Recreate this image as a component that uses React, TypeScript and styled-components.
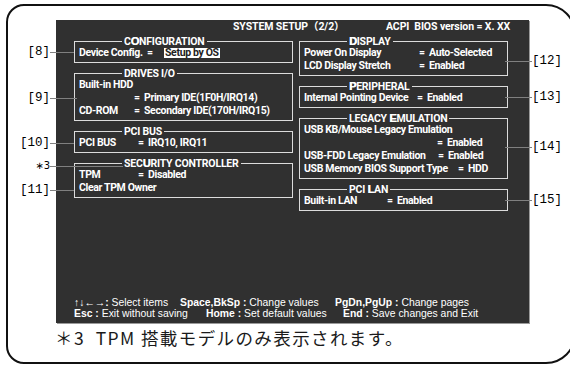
import React from 'react';
import styled, { createGlobalStyle } from 'styled-components';

const GlobalStyle = createGlobalStyle`
    html, body {
        margin: 0;
        padding: 0;
        background: #ffffff;
    }
    body {
        width: 570px;
        height: 365px;
        overflow: hidden;
    }
`;

const Page = styled.div`
    position: relative;
    width: 570px;
    height: 365px;
    box-sizing: border-box;
    padding: 4px 0 0 6px;
    overflow: hidden;
`;

const Frame = styled.div`
    width: 570px;
    height: 360px;
    box-sizing: border-box;
    border: 2px solid #111111;
    border-radius: 18px 30px 30px 18px;
    padding: 14px 0 0 48px;
`;

const Screen = styled.div`
    width: 473px;
    height: 303px;
    box-sizing: border-box;
    background: #303030;
    box-shadow: 1px 1px 0 #9a9a9a;
    color: #ffffff;
    font-family: Roboto, "Liberation Sans", "Noto Sans CJK JP", sans-serif;
    font-size: 10.5px;
    font-weight: 700;
    letter-spacing: -0.35px;
    display: flex;
    flex-direction: column;
    padding: 1px 21px 4px 18px;
`;

const Header = styled.div`
    display: flex;
    padding-left: 159px;
    line-height: 12px;
    white-space: pre;
    letter-spacing: -0.1px;
`;

const HeaderTitle = styled.span`
    width: 153px;
    flex-shrink: 0;
`;

const Columns = styled.div`
    display: grid;
    grid-template-columns: 219px 209px;
    column-gap: 6px;
    margin-top: 4px;
    align-items: start;
`;

const Column = styled.div`
    display: flex;
    flex-direction: column;
    gap: 6px;
`;

const Group = styled.fieldset`
    margin: 0;
    padding: 0 4px 3px;
    border: 1px solid #dcdcdc;
    min-width: 0;
`;

const Legend = styled.legend`
    margin-left: 43px;
    padding: 0 2px;
    line-height: 9px;
    letter-spacing: -0.2px;
`;

const Key = styled.span`
    font-family: "Liberation Sans", Arial, sans-serif;
    font-size: 11px;
    font-weight: 900;
    text-shadow: 0.4px 0 0 #ffffff;
`;

const Row = styled.div`
    display: flex;
    line-height: 13px;
    white-space: pre;
`;

const Label = styled.span<{ $w?: number }>`
    flex-shrink: 0;
    ${p => (p.$w ? `width: ${p.$w}px;` : 'margin-right: 5px;')}
`;

const Eq = styled.span`
    width: 10px;
    flex-shrink: 0;
`;

const Selected = styled.span`
    margin-left: 7px;
    padding: 0 1px;
    align-self: center;
    line-height: 10px;
    background: #ffffff;
    color: #222222;
`;

const Footer = styled.div`
    margin-top: auto;
    font-family: "Liberation Sans", Arial, sans-serif;
    font-size: 10.4px;
    line-height: 11px;
    letter-spacing: 0;
`;

const HintLine = styled.div`
    display: flex;
    white-space: pre;
`;

const Hint = styled.span<{ $w?: number }>`
    ${p => (p.$w ? `width: ${p.$w}px; flex-shrink: 0;` : '')}
`;

const Desc = styled.span`
    font-weight: normal;
`;

const Note = styled.div`
    margin: 5px 0 0 -1px;
    font-family: "Noto Sans CJK JP", "Noto Sans", sans-serif;
    font-size: 17.5px;
    letter-spacing: 1.4px;
    line-height: 20px;
    color: #1a1a1a;
    white-space: pre;
`;

const Callout = styled.div<{ $y: number; $x: number; $side: 'left' | 'right' }>`
    position: absolute;
    top: ${p => p.$y - 7}px;
    ${p => (p.$side === 'left' ? `right: ${570 - p.$x}px;` : `left: ${p.$x}px;`)}
    display: flex;
    align-items: center;
    height: 14px;
`;

const Tag = styled.span<{ $small?: boolean }>`
    font-family: ${p => (p.$small ? '"DejaVu Sans", sans-serif' : '"Liberation Mono", monospace')};
    font-size: ${p => (p.$small ? '10px' : '12.5px')};
    line-height: 14px;
    color: #000000;
`;

const Leader = styled.span<{ $len: number }>`
    width: ${p => p.$len}px;
    height: 1px;
    background: #808080;
`;

type Item = { label: string; w?: number; value?: string };

const Rows = ({ items }: { items: Item[] }) => (
    <>
        {items.map((it, i) => (
            <Row key={i}>
                <Label $w={it.w}>{it.label}</Label>
                {it.value !== undefined && <Eq>=</Eq>}
                {it.value}
            </Row>
        ))}
    </>
);

const leftCallouts = [
    { tag: '[8]', y: 52, x: 74 },
    { tag: '[9]', y: 98, x: 77 },
    { tag: '[10]', y: 143, x: 74 },
    { tag: '∗3', y: 166, x: 123, small: true },
    { tag: '[11]', y: 190, x: 74 },
];

const rightCallouts = [
    { tag: '[12]', y: 61 },
    { tag: '[13]', y: 97 },
    { tag: '[14]', y: 147 },
    { tag: '[15]', y: 200 },
];

const App = () => (
    <Page>
        <GlobalStyle />
        <Frame>
            <Screen>
                <Header>
                    <HeaderTitle>SYSTEM SETUP（2/2）</HeaderTitle>
                    <span>ACPI  BIOS version = X. XX</span>
                </Header>
                <Columns>
                    <Column>
                        <Group>
                            <Legend>C<Key>O</Key>NFIGURATION</Legend>
                            <Row>
                                <Label $w={68}>Device Config.</Label>
                                <Eq>=</Eq>
                                <Selected>Setup by OS</Selected>
                            </Row>
                        </Group>
                        <Group>
                            <Legend>DRIVES I/O</Legend>
                            <Rows
                                items={[
                                    { label: 'Built-in HDD' },
                                    { label: '', w: 55, value: 'Primary IDE(1F0H/IRQ14)' },
                                    { label: 'CD-ROM', w: 55, value: 'Secondary IDE(170H/IRQ15)' },
                                ]}
                            />
                        </Group>
                        <Group>
                            <Legend>PCI BUS</Legend>
                            <Rows items={[{ label: 'PCI BUS', w: 59, value: 'IRQ10, IRQ11' }]} />
                        </Group>
                        <Group>
                            <Legend>SEC<Key>U</Key>RITY CONTROLLER</Legend>
                            <Rows
                                items={[
                                    { label: 'TPM', w: 59, value: 'Disabled' },
                                    { label: 'Clear TPM Owner' },
                                ]}
                            />
                        </Group>
                    </Column>
                    <Column>
                        <Group>
                            <Legend><Key>D</Key>ISPLAY</Legend>
                            <Rows
                                items={[
                                    { label: 'Power On Display', w: 115, value: 'Auto-Selected' },
                                    { label: 'LCD Display Stretch', w: 115, value: 'Enabled' },
                                ]}
                            />
                        </Group>
                        <Group>
                            <Legend><Key>P</Key>ERIPHERAL</Legend>
                            <Rows items={[{ label: 'Internal Pointing Device', w: 113, value: 'Enabled' }]} />
                        </Group>
                        <Group>
                            <Legend>LEGACY <Key>E</Key>MULATION</Legend>
                            <Rows
                                items={[
                                    { label: 'USB KB/Mouse Legacy Emulation' },
                                    { label: '', w: 133, value: 'Enabled' },
                                    { label: 'USB-FDD Legacy Emulation', w: 134, value: 'Enabled' },
                                    { label: 'USB Memory BIOS Support Type', w: 154, value: 'HDD' },
                                ]}
                            />
                        </Group>
                        <Group>
                            <Legend>PCI <Key>L</Key>AN</Legend>
                            <Rows items={[{ label: 'Built-in LAN', w: 83, value: 'Enabled' }]} />
                        </Group>
                    </Column>
                </Columns>
                <Footer>
                    <HintLine>
                        <Hint $w={106}>↑↓←→: <Desc>Select items</Desc></Hint>
                        <Hint $w={155}>Space,BkSp : <Desc>Change values</Desc></Hint>
                        <Hint>PgDn,PgUp : <Desc>Change pages</Desc></Hint>
                    </HintLine>
                    <HintLine>
                        <Hint $w={132}>Esc : <Desc>Exit without saving</Desc></Hint>
                        <Hint $w={137}>Home : <Desc>Set default values</Desc></Hint>
                        <Hint>End : <Desc>Save changes and Exit</Desc></Hint>
                    </HintLine>
                </Footer>
            </Screen>
            <Note>＊3  TPM 搭載モデルのみ表示されます。</Note>
        </Frame>
        {leftCallouts.map(c => (
            <Callout key={c.tag} $side="left" $x={c.x} $y={c.y}>
                <Tag $small={c.small}>{c.tag}</Tag>
                <Leader $len={c.x - 50} />
            </Callout>
        ))}
        {rightCallouts.map(c => (
            <Callout key={c.tag} $side="right" $x={505} $y={c.y}>
                <Leader $len={27} />
                <Tag>{c.tag}</Tag>
            </Callout>
        ))}
    </Page>
);

export default App;
